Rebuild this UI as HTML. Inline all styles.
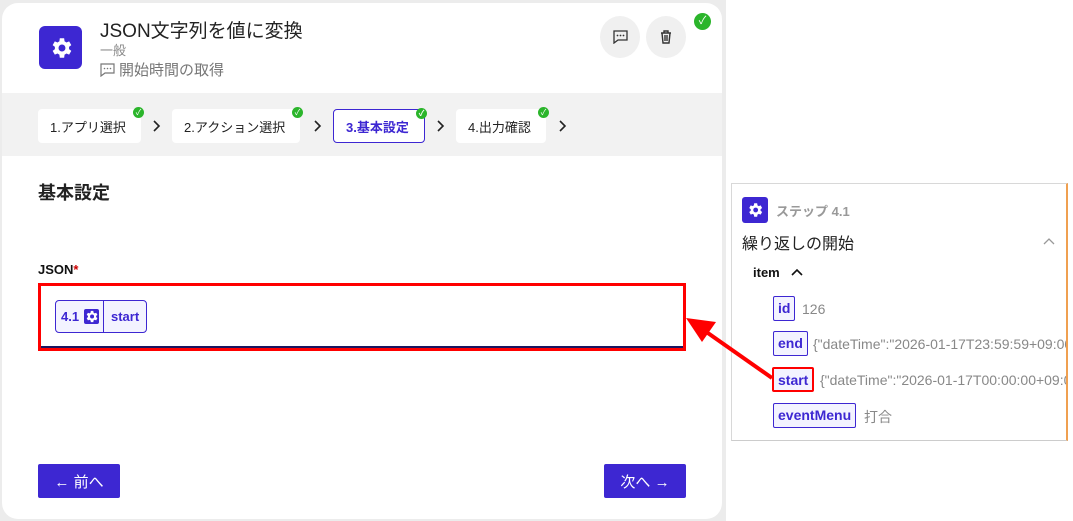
<!DOCTYPE html>
<html><head><meta charset="utf-8"><style>
*{box-sizing:border-box;margin:0;padding:0}
body{width:1073px;height:521px;background:#fff;font-family:"Liberation Sans","Noto Sans CJK JP",sans-serif;position:relative;overflow:hidden}
.bg{position:absolute;left:0;top:0;width:726px;height:521px;background:#ececec}
.card{position:absolute;left:2px;top:3px;width:720px;height:516px;background:#fff;border-radius:16px;overflow:hidden}
.ic{position:absolute;background:#3d27d2;border-radius:6px;display:flex;align-items:center;justify-content:center}
.abs{position:absolute}
.steps{position:absolute;left:0;top:90px;width:720px;height:63px;background:#f2f2f2}
.st{position:absolute;top:16px;height:34px;background:#fff;border-radius:4px;font-size:13px;color:#222;display:flex;align-items:center;padding-left:12px}
.ck{position:absolute;right:-3px;top:-2px;width:11px;height:11px;border-radius:50%;background:#2bb52b;color:#fff;font-size:8px;line-height:11px;text-align:center}
.chev{position:absolute;top:27px}
.btn{position:absolute;top:461px;height:34px;background:#3d27d2;color:#fff;font-size:15px;display:flex;align-items:center;justify-content:center;border-radius:2px}
.tag{position:absolute;border:1px solid #3d27d2;background:#f3f3ff;color:#3d27d2;font-weight:bold;font-size:14px;border-radius:2px;height:25px;line-height:23px;padding:0 4px}
.val{position:absolute;color:#888;font-size:14px;white-space:nowrap}
</style></head><body>
<div class="bg"></div>
<div class="card">
 <div class="ic" style="left:37px;top:23px;width:43px;height:43px;border-radius:6px">
  <svg width="26" height="26" viewBox="0 0 24 24"><path fill="#fff" d="M19.4 13a7.5 7.5 0 0 0 0-2l2.1-1.6-2-3.5-2.5 1a7.6 7.6 0 0 0-1.7-1L14.9 3h-4l-.4 2.9a7.6 7.6 0 0 0-1.7 1l-2.5-1-2 3.5L6.4 11a7.5 7.5 0 0 0 0 2l-2.1 1.6 2 3.5 2.5-1a7.6 7.6 0 0 0 1.7 1l.4 2.9h4l.4-2.9a7.6 7.6 0 0 0 1.7-1l2.5 1 2-3.5zM12.9 15.2a3.2 3.2 0 1 1 0-6.4 3.2 3.2 0 0 1 0 6.4z"/></svg>
 </div>
 <div class="abs" style="left:98px;top:13px;font-size:19px;color:#222">JSON文字列を値に変換</div>
 <div class="abs" style="left:98px;top:37px;font-size:13px;color:#888">一般</div>
 <div class="abs" style="left:98px;top:56px;font-size:15px;color:#777;display:flex;align-items:center"><svg width="15" height="14" viewBox="0 0 15 14" style="margin-right:4px"><path d="M1 1h13v9H5l-4 3z" fill="none" stroke="#777" stroke-width="1.2"/><circle cx="4.5" cy="5.5" r=".8" fill="#777"/><circle cx="7.5" cy="5.5" r=".8" fill="#777"/><circle cx="10.5" cy="5.5" r=".8" fill="#777"/></svg>開始時間の取得</div>
 <div class="abs" style="left:598px;top:13px;width:40px;height:42px;border-radius:50%;background:#f0f0f0;display:flex;align-items:center;justify-content:center"><svg width="15" height="14" viewBox="0 0 15 14"><path d="M1 1h13v9H5l-4 3z" fill="none" stroke="#333" stroke-width="1.3"/><circle cx="4.5" cy="5.5" r=".9" fill="#333"/><circle cx="7.5" cy="5.5" r=".9" fill="#333"/><circle cx="10.5" cy="5.5" r=".9" fill="#333"/></svg></div>
 <div class="abs" style="left:644px;top:13px;width:40px;height:42px;border-radius:50%;background:#f0f0f0;display:flex;align-items:center;justify-content:center">
  <svg width="12" height="14" viewBox="0 0 12 14"><path d="M1 3h10M4 3V1h4v2M2 3l1 10h6l1-10M5 5v6M7 5v6" stroke="#333" stroke-width="1.4" fill="none"/></svg></div>
 <div class="abs" style="left:692px;top:10px;width:17px;height:17px;border-radius:50%;background:#2bb52b;color:#fff;font-size:11px;text-align:center;line-height:17px">✓</div>
 <div class="steps">
  <div class="st" style="left:36px;width:103px">1.アプリ選択<span class="ck">✓</span></div>
  <svg class="chev" style="left:151px" width="8" height="12"><path d="M1 1l5 5-5 5" stroke="#222" stroke-width="1.6" fill="none"/></svg>
  <div class="st" style="left:170px;width:128px">2.アクション選択<span class="ck">✓</span></div>
  <svg class="chev" style="left:312px" width="8" height="12"><path d="M1 1l5 5-5 5" stroke="#222" stroke-width="1.6" fill="none"/></svg>
  <div class="st" style="left:331px;width:92px;border:1px solid #3d27d2;color:#3d27d2;font-weight:bold">3.基本設定<span class="ck">✓</span></div>
  <svg class="chev" style="left:435px" width="8" height="12"><path d="M1 1l5 5-5 5" stroke="#222" stroke-width="1.6" fill="none"/></svg>
  <div class="st" style="left:454px;width:90px">4.出力確認<span class="ck">✓</span></div>
  <svg class="chev" style="left:557px" width="8" height="12"><path d="M1 1l5 5-5 5" stroke="#222" stroke-width="1.6" fill="none"/></svg>
 </div>
 <div class="abs" style="left:36px;top:176px;font-size:18px;font-weight:bold;color:#222">基本設定</div>
 <div class="abs" style="left:36px;top:259px;font-size:13px;font-weight:bold;color:#111">JSON<span style="color:#c00">*</span></div>
 <div class="abs" style="left:36px;top:280px;width:648px;height:68px;border:3px solid #f00;background:#fff"><div style="position:absolute;left:0;right:0;bottom:0;height:2px;background:#1a1660"></div></div>
 <div class="abs" style="left:53px;top:297px;width:92px;height:33px;border:1px solid #3d27d2;border-radius:4px;background:#f3f3ff;color:#3d27d2;font-weight:bold;font-size:13px">
  <span class="abs" style="left:5px;top:8px">4.1</span>
  <span class="abs" style="left:28px;top:8px;width:15px;height:15px;background:#3d27d2;border-radius:2px"><svg width="15" height="15" viewBox="0 0 24 24"><path fill="#fff" d="M19.4 13a7.5 7.5 0 0 0 0-2l2.1-1.6-2-3.5-2.5 1a7.6 7.6 0 0 0-1.7-1L14.9 3h-4l-.4 2.9a7.6 7.6 0 0 0-1.7 1l-2.5-1-2 3.5L6.4 11a7.5 7.5 0 0 0 0 2l-2.1 1.6 2 3.5 2.5-1a7.6 7.6 0 0 0 1.7 1l.4 2.9h4l.4-2.9a7.6 7.6 0 0 0 1.7-1l2.5 1 2-3.5zM12.9 15.2a3.2 3.2 0 1 1 0-6.4 3.2 3.2 0 0 1 0 6.4z"/></svg></span>
  <span class="abs" style="left:47px;top:0;width:1px;height:31px;background:#3d27d2"></span>
  <span class="abs" style="left:55px;top:8px">start</span>
 </div>
 <div class="btn" style="left:36px;width:82px">← 前へ</div>
 <div class="btn" style="left:602px;width:82px">次へ →</div>
</div>
<div class="abs" style="left:731px;top:183px;width:337px;height:258px;border:1px solid #d8d8d8;border-right:2px solid #f0a050;border-bottom:1px solid #ccc;background:#fff;overflow:hidden"></div>
<div class="ic" style="left:742px;top:197px;width:26px;height:26px;border-radius:3px">
 <svg width="18" height="18" viewBox="0 0 24 24"><path fill="#fff" d="M19.4 13a7.5 7.5 0 0 0 0-2l2.1-1.6-2-3.5-2.5 1a7.6 7.6 0 0 0-1.7-1L14.9 3h-4l-.4 2.9a7.6 7.6 0 0 0-1.7 1l-2.5-1-2 3.5L6.4 11a7.5 7.5 0 0 0 0 2l-2.1 1.6 2 3.5 2.5-1a7.6 7.6 0 0 0 1.7 1l.4 2.9h4l.4-2.9a7.6 7.6 0 0 0 1.7-1l2.5 1 2-3.5zM12.9 15.2a3.2 3.2 0 1 1 0-6.4 3.2 3.2 0 0 1 0 6.4z"/></svg></div>
<div class="abs" style="left:776px;top:201px;font-size:13px;font-weight:bold;color:#999">ステップ 4.1</div>
<div class="abs" style="left:742px;top:230px;font-size:16px;color:#222">繰り返しの開始</div>
<svg class="abs" style="left:1043px;top:237px" width="12" height="8"><path d="M1 7l5-5 5 5" stroke="#999" stroke-width="1.3" fill="none"/></svg>
<div class="abs" style="left:753px;top:265px;font-size:13px;font-weight:bold;color:#111">item</div>
<svg class="abs" style="left:791px;top:268px" width="12" height="8"><path d="M1 7l5-5 5 5" stroke="#111" stroke-width="1.6" fill="none"/></svg>
<div class="tag" style="left:773px;top:296px">id</div><div class="val" style="left:802px;top:301px">126</div>
<div class="tag" style="left:773px;top:331px">end</div><div style="position:absolute;left:813px;top:336px;width:253px;overflow:hidden" class="val">{"dateTime":"2026-01-17T23:59:59+09:00"}</div>
<div class="tag" style="left:772px;top:367px;border:2px solid #f00">start</div><div style="position:absolute;left:820px;top:372px;width:246px;overflow:hidden" class="val">{"dateTime":"2026-01-17T00:00:00+09:00"}</div>
<div class="tag" style="left:773px;top:403px">eventMenu</div><div class="val" style="left:864px;top:407px">打合</div>
<svg class="abs" style="left:0;top:0" width="1073" height="521"><line x1="772" y1="378" x2="705" y2="331" stroke="#f00" stroke-width="4"/><polygon points="686,318 716,322 702,342" fill="#f00"/></svg>
</body></html>
